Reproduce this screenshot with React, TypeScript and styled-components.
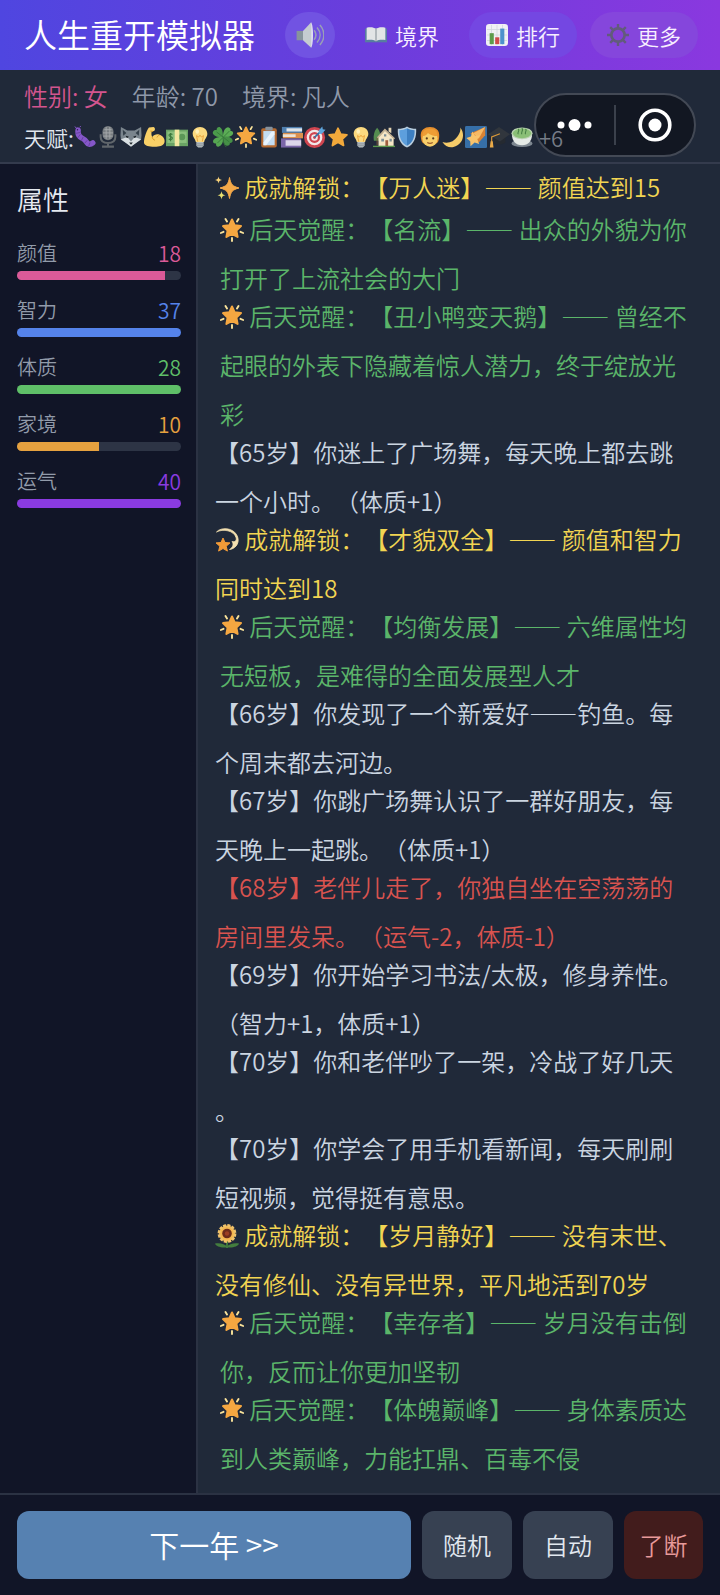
import { ReactNode } from "react";
import styled, { createGlobalStyle } from "styled-components";

type IconName =
  | "worm" | "mic" | "wolf" | "muscle" | "cash" | "bulb" | "clover" | "glow"
  | "clipboard" | "books" | "target" | "star" | "house" | "shield" | "person"
  | "moon" | "comet" | "cap" | "tea" | "sound" | "book" | "chart" | "gear"
  | "sparkles" | "dizzy" | "sunflower";

const STAR = "M12 2.5l2.9 6.3 6.8.8-5 4.7 1.3 6.9-6-3.4-6 3.4 1.3-6.9-5-4.7 6.8-.8z";

const ICONS: Record<IconName, ReactNode> = {
  worm: (
    <>
      <path d="M4.500 4.500c-.5 4 .5 7 4 8.500 3 1.300 4 2.500 5.500 5 1.500 2.500 4 2.500 6.500.5" fill="none" stroke="#8557c9" strokeWidth="6" strokeLinecap="round" />
      <path d="M2 8l5-1M4 13l3-4M8 16l2-4M11.500 19l3-3.500M16 22l1.500-4" stroke="#65409f" strokeWidth="1" />
      <path d="M2.500 2.500L1 .5M6 1.500L7.500 0" stroke="#8557c9" strokeWidth="1" />
      <circle cx="3.800" cy="4" r=".8" fill="#2c1b50" />
    </>
  ),
  mic: (
    <>
      <rect x="6" y="0" width="12" height="15.500" rx="6" fill="#777c80" />
      <path d="M8 4h8M6.500 7.500h11M7 11h10M10 1v13M14 1v13" stroke="#a5a9ab" strokeWidth="1" />
      <path d="M4 9v3c0 4.500 3.500 6.500 8 6.500s8-2 8-6.500V9M12 18v4M5.500 22.500h13" fill="none" stroke="#60666b" strokeWidth="2.200" />
    </>
  ),
  wolf: (
    <>
      <path d="M1 1l7 4h8l7-4 .5 9-.5 5-5 3-6 4-6-4-5-3-.5-5z" fill="#7a858d" />
      <path d="M3 4l4 3.500-3.500 3zM21 4l-4 3.500 3.500 3z" fill="#34404a" />
      <path d="M1 14.500l7-2.500 4 5 4-5 7 2.500-5.500 4-5.500 4-5.500-4z" fill="#d8dfe2" />
      <path d="M6.500 10.500l3 1-1 1.500-2-.7zM17.500 10.500l-3 1 1 1.500 2-.7z" fill="#1d242a" />
      <path d="M10 18h4l-2 2.500z" fill="#1d242a" />
    </>
  ),
  muscle: (
    <>
      <path d="M6.500 1.500l5-.5c2 .5 2 3.500.5 4.500l-2.500.5c-.5 2-.5 4 .5 6 2-2.500 5-3.500 8-2.500 4 1.200 6 4.500 5.500 8-.5 3.500-4 5-9 5-6 0-11-.5-13-3C0 17 3 6 6.500 1.500z" fill="#f9d067" />
      <path d="M10 12c.3 1.800 1.300 3 3 3.500M8 5.500l3 .5M18 10c-1.500.5-2.500 1.500-2.800 2.500" fill="none" stroke="#cf952a" strokeWidth="1" />
    </>
  ),
  cash: (
    <>
      <rect x="0" y="4" width="24" height="18" fill="#6aa365" />
      <rect x="1.500" y="6" width="21" height="12.500" fill="#8abf7d" />
      <circle cx="17.500" cy="12" r="3.500" fill="#5b9657" />
      <path d="M7 9.200c-2-1.200-3.800-.4-3.800 1s3.800 1.400 3.800 3-2.200 2.200-4 1M5 7.500v9" fill="none" stroke="#3c783d" strokeWidth="1.200" />
      <rect x="9.500" y="4" width="5" height="18" fill="#f3e7a1" />
    </>
  ),
  bulb: (
    <>
      <path d="M12 1c4.700 0 8 3.300 8 7.500 0 3.500-2.500 5-3.500 9h-9C6.500 13.500 4 12 4 8.500 4 4.300 7.300 1 12 1z" fill="#fbd97f" />
      <path d="M9.500 17l-1.300-6.500 2.300 1.500L12 10l1.500 2 2.300-1.500-1.300 6.500" fill="none" stroke="#e9a13a" strokeWidth="1" />
      <ellipse cx="9" cy="6" rx="2" ry="2.500" fill="#fff0b8" />
      <path d="M8 17.500h8v4L14 23.500h-4L8 21.500z" fill="#b4bcc0" />
      <path d="M8 19.500h8M8.500 21.500h7" stroke="#7f898e" strokeWidth=".8" />
    </>
  ),
  clover: (
    <>
      <path d="M12 12C4 13 0 9 1 6.500 2 4 4.500 4.500 5 4.500 5 2 7 .5 9 1.500c2.500 1.500 3 6 3 10.500z" fill="#4b9a4b" />
      <path d="M12 12C12 5 15 1 18 1.500c2.500.5 2.500 3 2 4 2-.5 3.500 1 3 3-1 3-6 4-11 3.500z" fill="#5bad55" />
      <path d="M12 12c6-1.500 10 1 10.500 3.500.3 2-1.500 3.300-3 3 .3 2-1.500 3.500-3.500 3C13 20.500 12 16 12 12z" fill="#458f46" />
      <path d="M12 12c1 6-2 10-5 10.500-2 .2-3-1.500-2.500-3.500C2 19.500.8 18 1.200 16 2 13 7 11.500 12 12z" fill="#56a652" />
      <path d="M5 6.500L19 17.500M19 5.500L6 18.500M12 13c0 4 1.500 8 3.500 10" fill="none" stroke="#347539" strokeWidth=".9" />
    </>
  ),
  glow: (
    <>
      <path d="M12 1.500l2.700 5.800 6.300.8-4.600 4.500 1.200 6.400-5.600-3.200L6.400 19l1.200-6.400L3 8.100l6.300-.8z" fill="#f5a741" stroke="#f5a741" strokeWidth="2" strokeLinejoin="round" />
      <path d="M5.500 1l1.500 2.500M18.500 1L17 3.500M.8 15l2.700-1.200M23.200 15l-2.700-1.200M12 20v3" stroke="#fbe49b" strokeWidth="1.900" strokeLinecap="round" />
    </>
  ),
  clipboard: (
    <>
      <rect x="3.500" y="2.500" width="17" height="21" rx="2" fill="#b4692f" />
      <rect x="5.800" y="5.500" width="12.400" height="15.500" fill="#c3ddf2" />
      <path d="M6 18l9-12h3v3L9 21H6z" fill="#e8f3fc" />
      <rect x="8" y=".8" width="8" height="4" rx="1" fill="#87919a" />
    </>
  ),
  books: (
    <>
      <path d="M1 1h22v6.500H1z" fill="#4f7faf" />
      <path d="M6 2.500h17v3.500H6z" fill="#dfe5ea" />
      <path d="M2 7.500h22v6H2z" fill="#db904d" />
      <path d="M2 9h14v3H2z" fill="#eee3d4" />
      <path d="M0 13.500h22v10H0z" fill="#7a66a8" />
      <path d="M5 15.500h17v6H5z" fill="#dcd6ea" />
    </>
  ),
  target: (
    <>
      <circle cx="11.500" cy="12.500" r="11.500" fill="#cf4550" />
      <circle cx="11.500" cy="12.500" r="8.500" fill="#f1e7e8" />
      <circle cx="11.500" cy="12.500" r="6" fill="#cf4550" />
      <circle cx="11.500" cy="12.500" r="3.600" fill="#f1e7e8" />
      <circle cx="11.500" cy="12.500" r="1.600" fill="#cf4550" />
      <path d="M11.500 12.500L19 5" stroke="#3574a8" strokeWidth="1.800" />
      <path d="M16 5l4-4.500.5 3 3 .5-4 4.500-3 .2z" fill="#5ea5dc" />
    </>
  ),
  star: <path d={STAR} fill="#f2a93b" stroke="#f2a93b" strokeWidth="2" strokeLinejoin="round" />,
  house: (
    <>
      <path d="M4.500 2C1.500 5 0 11 1 16h7c1-5-.5-11-3.500-14z" fill="#548d50" />
      <path d="M4 12h1v9H4z" fill="#80583b" />
      <path d="M6 12l7-7 9.500 8v9H6z" fill="#f5e6c6" />
      <path d="M5 13l8-9 10.500 10" fill="none" stroke="#c3b192" strokeWidth="1.800" />
      <path d="M17 2h3v6l-3-2z" fill="#e4d3b0" />
      <path d="M9 14h3v3H9zM12 9h2.500v2.500H12zM18 14h2.500v3H18z" fill="#7c8f96" />
      <path d="M13.500 15.500h3V22h-3z" fill="#a05d3f" />
      <path d="M0 21.500h24V23H0z" fill="#5b984e" />
    </>
  ),
  shield: (
    <>
      <path d="M12 .5c3 2 6 2.500 10 2.500.5 9-2 17-10 20.500C4 20 1.500 12 2 3c4 0 7-.5 10-2.500z" fill="#b9cedf" />
      <path d="M12 2.500c2.500 1.500 5 2 8.300 2.200.2 7.300-1.800 13.500-8.300 16.800z" fill="#3d7fc1" />
      <path d="M12 2.500C9.500 4 7 4.500 3.700 4.700c-.2 7.300 1.800 13.500 8.300 16.800z" fill="#5d9fdd" />
    </>
  ),
  person: (
    <>
      <path d="M2 12C1 4.500 6 1 12 1s11 3.500 10 11c-.5 4-1 6-3 7H5c-2-1-2.500-3-3-7z" fill="#e58e2d" />
      <ellipse cx="12" cy="13.500" rx="8.300" ry="9" fill="#f8cf6b" />
      <path d="M3.700 11c2.300 0 5-1.500 6-3.500 2 2 6.500 3.500 10.600 3.500C20 5 17 3 12 3S4 5 3.700 11z" fill="#ee9d35" />
      <circle cx="8.500" cy="13.500" r="1.200" fill="#54371f" />
      <circle cx="15.500" cy="13.500" r="1.200" fill="#54371f" />
      <path d="M9 18c2 1.300 4 1.300 6 0" fill="none" stroke="#9b5a2b" strokeWidth="1.300" />
    </>
  ),
  moon: <path d="M20 1.500c6 8 2.500 19-7.500 21.500C8 24 3 22 .5 17.500c6.500 2 12.500-.5 16-5.500C19 8.500 20.500 5.500 20 1.500z" fill="#f5cb69" />,
  comet: (
    <>
      <rect width="24" height="24" rx="1.500" fill="#366fa8" />
      <path d="M6 8L22 1v9l-7 8z" fill="#d98335" />
      <path d="M9 8L22 1l-7 13z" fill="#f6b965" />
      <path d="M8 6l3 4.500 5.500-.5-3 4.500 2 5-5-1.500L6 22l-.3-5.500L1.500 13l5-1.500z" fill="#f8c36c" />
    </>
  ),
  cap: (
    <>
      <path d="M5 11v7c4 3 10 3 14 0v-7z" fill="#252a31" />
      <path d="M0 9L12 1l12 8-11 8z" fill="#31363d" />
      <path d="M13 8.500L4 12v6" fill="none" stroke="#d99839" strokeWidth="1.300" />
      <path d="M2.800 16.500h2.400l.8 7H2z" fill="#e9aa48" />
    </>
  ),
  tea: (
    <>
      <ellipse cx="12" cy="19" rx="11.500" ry="4" fill="#7d8790" />
      <path d="M1 9h22c0 7-4 12-11 12S1 16 1 9z" fill="#e5eae6" />
      <ellipse cx="12" cy="8" rx="11.500" ry="6.500" fill="#bcd3b3" />
      <ellipse cx="12" cy="8" rx="10" ry="5.300" fill="#8abf76" />
      <path d="M8 9c-2-2 2-3 0-6M12 9c-2-2 2-3 0-7M16 9c-2-2 2-3 0-6" fill="none" stroke="#447c43" strokeWidth="1.100" />
    </>
  ),
  sound: (
    <>
      <path d="M.5 8.500H6v8H.5z" fill="#87949c" />
      <path d="M6 8.500L13 1v22l-7-6.500z" fill="#c5ccd0" />
      <path d="M13 1c2 3 2 19 0 22z" fill="#eef1f2" />
      <path d="M15.500 8c2 2.500 2 5.500 0 8M18 5.500c3.500 4 3.500 9 0 13M20.500 3.500c4.500 5 4.500 12 0 17" fill="none" stroke="#9aa0b5" strokeWidth="1.300" />
    </>
  ),
  book: (
    <>
      <path d="M0 5h24v15H0z" fill="#587da0" />
      <path d="M1.800 4c4-1 7.700-.6 10.200 1.200C14.500 3.400 18.200 3 22.200 4v13.500c-4-.6-7.700-.3-10.200 1.200-2.500-1.500-6.200-1.800-10.200-1.200z" fill="#e2e5e6" />
      <path d="M12 5.200v13.500" stroke="#9ba4aa" strokeWidth="1.500" />
    </>
  ),
  chart: (
    <>
      <rect width="24" height="24" rx="3.500" fill="#f0f1f4" />
      <path d="M1 6h22M1 12h22M1 18h22M6 1v22M12 1v22M18 1v22" stroke="#cfd6dc" strokeWidth=".8" />
      <path d="M4 10h4.500v12H4z" fill="#5d9b4c" />
      <path d="M10 14.500h4.500V22H10z" fill="#cf4b4b" />
      <path d="M15.500 5H20v17h-4.500z" fill="#4d91cc" />
    </>
  ),
  gear: (
    <>
      <path d="M12 0v24M0 12h24M3.500 3.500l17 17M20.500 3.500l-17 17" stroke="#625b7b" strokeWidth="2.600" />
      <circle cx="12" cy="12" r="8.700" fill="#625b7b" />
      <circle cx="12" cy="12" r="5.800" fill="#8541d6" />
    </>
  ),
  sparkles: (
    <>
      <path d="M14.500 1.500c1.200 6.800 3 8.800 9.500 10.500-6.500 1.700-8.300 3.700-9.500 10.500C13.300 15.700 11.500 13.700 5 12c6.500-1.700 8.300-3.700 9.500-10.500z" fill="#f4a949" stroke="#f4a949" strokeWidth="1" />
      <path d="M3.500.5C4 3 4.500 3.500 7 4c-2.500.5-3 1-3.500 3.500C3 5 2.500 4.500 0 4c2.500-.5 3-1 3.500-3.500z" fill="#f8d27a" />
      <path d="M6.500 15c.5 3 1.200 3.700 4 4.300-2.800.6-3.500 1.300-4 4.300-.5-3-1.200-3.700-4-4.300 2.800-.6 3.500-1.300 4-4.300z" fill="#e8df70" />
    </>
  ),
  dizzy: (
    <>
      <path d="M1.500 4C6-1 17-.5 21.500 6.500c4 6.500.5 14-7 15 3.500-2 4.500-5.500 2.500-8 3 1 5-1 4-4C19 2.500 8 .5 1.500 4z" fill="#f3e0b0" stroke="#f3e0b0" strokeWidth=".8" />
      <path d="M8 10l2 4.500 5 .4-3.800 3.300 1.200 4.900-4.400-2.600-4.400 2.600 1.200-4.900L1 14.900l5-.4z" fill="#f19b38" stroke="#f19b38" strokeWidth="1" strokeLinejoin="round" />
    </>
  ),
  sunflower: (
    <>
      <path d="M11 16h2v8h-2z" fill="#3f743c" />
      <path d="M0 19.500c5-1 10 .5 12 3 2-2.500 7-4 12-3-1 3-6 4.500-12 3.800C6 24 1 22.500 0 19.500z" fill="#437d3e" />
      <circle cx="12" cy="9.500" r="8" fill="#f3b64f" stroke="#f0c26b" strokeWidth="2.800" strokeDasharray="3 1.200" />
      <circle cx="12" cy="9.500" r="4.800" fill="#6b2b1b" />
      <circle cx="12" cy="9.500" r="2.200" fill="#9b3e22" />
    </>
  ),
};

const IconSvg = styled.svg<{ $size: number }>`
  flex: none;
  width: ${({ $size }) => $size}px;
  height: ${({ $size }) => $size}px;
  vertical-align: -3px;
`;

const Icon = ({ name, size = 22 }: { name: IconName; size?: number }) => (
  <IconSvg $size={size} viewBox="0 0 24 24" aria-hidden="true">
    {ICONS[name]}
  </IconSvg>
);

interface Stat {
  label: string;
  value: number;
  color: string;
}

const MAX_STAT = 20;

const stats: Stat[] = [
  { label: "颜值", value: 18, color: "#db5a98" },
  { label: "智力", value: 37, color: "#5583ea" },
  { label: "体质", value: 28, color: "#5fbf68" },
  { label: "家境", value: 10, color: "#e6a13f" },
  { label: "运气", value: 40, color: "#8a3be0" },
];

const talents: IconName[] = [
  "worm", "mic", "wolf", "muscle", "cash", "bulb", "clover", "glow", "clipboard", "books",
  "target", "star", "bulb", "house", "shield", "person", "moon", "comet", "cap", "tea",
];

type EntryKind = "normal" | "achievement" | "awaken" | "bad";

interface LogEntry {
  kind: EntryKind;
  icon?: IconName;
  text: string;
}

const log: LogEntry[] = [
  { kind: "achievement", icon: "sparkles", text: "成就解锁：【万人迷】—— 颜值达到15" },
  { kind: "awaken", icon: "glow", text: "后天觉醒：【名流】—— 出众的外貌为你打开了上流社会的大门" },
  { kind: "awaken", icon: "glow", text: "后天觉醒：【丑小鸭变天鹅】—— 曾经不起眼的外表下隐藏着惊人潜力，终于绽放光彩" },
  { kind: "normal", text: "【65岁】你迷上了广场舞，每天晚上都去跳一个小时。（体质+1）" },
  { kind: "achievement", icon: "dizzy", text: "成就解锁：【才貌双全】—— 颜值和智力同时达到18" },
  { kind: "awaken", icon: "glow", text: "后天觉醒：【均衡发展】—— 六维属性均无短板，是难得的全面发展型人才" },
  { kind: "normal", text: "【66岁】你发现了一个新爱好——钓鱼。每个周末都去河边。" },
  { kind: "normal", text: "【67岁】你跳广场舞认识了一群好朋友，每天晚上一起跳。（体质+1）" },
  { kind: "bad", text: "【68岁】老伴儿走了，你独自坐在空荡荡的房间里发呆。（运气-2，体质-1）" },
  { kind: "normal", text: "【69岁】你开始学习书法/太极，修身养性。（智力+1，体质+1）" },
  { kind: "normal", text: "【70岁】你和老伴吵了一架，冷战了好几天。" },
  { kind: "normal", text: "【70岁】你学会了用手机看新闻，每天刷刷短视频，觉得挺有意思。" },
  { kind: "achievement", icon: "sunflower", text: "成就解锁：【岁月静好】—— 没有末世、没有修仙、没有异世界，平凡地活到70岁" },
  { kind: "awaken", icon: "glow", text: "后天觉醒：【幸存者】—— 岁月没有击倒你，反而让你更加坚韧" },
  { kind: "awaken", icon: "glow", text: "后天觉醒：【体魄巅峰】—— 身体素质达到人类巅峰，力能扛鼎、百毒不侵" },
];

const entryColors: Record<EntryKind, string> = {
  normal: "#cbd5e1",
  achievement: "#f2d552",
  awaken: "#5bb56a",
  bad: "#d9534f",
};

const GlobalStyle = createGlobalStyle`
  * {
    box-sizing: border-box;
  }
  body {
    margin: 0;
    background: #111527;
    font-family: "Noto Sans CJK SC", sans-serif;
    font-weight: 350;
    text-spacing-trim: space-all;
  }
  button {
    border: 0;
    font: inherit;
    cursor: pointer;
  }
`;

const Screen = styled.div`
  display: flex;
  flex-direction: column;
  min-height: 100vh;
`;

const Header = styled.header`
  display: flex;
  align-items: center;
  gap: 13px;
  height: 70px;
  padding: 0 22px 0 24px;
  background: linear-gradient(90deg, #4f46e0, #6a3ddc 50%, #8a38df);
`;

const Title = styled.h1`
  flex: 1;
  margin: 0;
  padding-bottom: 2px;
  color: #fff;
  font-size: 33px;
  line-height: 48px;
  font-weight: 350;
  white-space: nowrap;
`;

const HeaderButton = styled.button<{ $tint: string; $round?: boolean }>`
  display: flex;
  align-items: center;
  justify-content: center;
  gap: 8px;
  height: 46px;
  padding: 0 ${({ $round }) => ($round ? 11 : 17)}px 1px;
  border-radius: 23px;
  background: ${({ $tint }) => $tint};
  color: #f7efff;
  font-size: 22px;
  line-height: 32px;
  white-space: nowrap;
`;

const InfoPanel = styled.section`
  position: relative;
  display: flex;
  flex-direction: column;
  gap: 7px;
  padding: 9px 24px 8px;
  border-bottom: 2px solid #343b4d;
  background: #202939;
  white-space: nowrap;
`;

const InfoRow = styled.div`
  display: flex;
  gap: 24px;
  color: #8f98a9;
  font-size: 24px;
  line-height: 34px;
`;

const Gender = styled.span`
  color: #d3558f;
`;

const TalentRow = styled.div`
  display: flex;
  align-items: center;
  color: #e2e8f0;
  font-size: 22px;
  line-height: 34px;
`;

const TalentIcons = styled.span`
  display: flex;
  gap: 1px;
`;

const MoreTalents = styled.span`
  position: relative;
  z-index: 1;
  padding-left: 6px;
  color: #767c87;
`;

const Capsule = styled.div`
  position: absolute;
  top: 23px;
  right: 24px;
  display: flex;
  align-items: center;
  width: 162px;
  height: 64px;
  border: 2px solid #434955;
  border-radius: 32px;
  background: #121722;
`;

const CapsuleButton = styled.button`
  display: flex;
  flex: 1;
  align-items: center;
  justify-content: center;
  height: 40px;
  padding: 0;
  background: transparent;

  & + & {
    border-left: 2px solid #3b414c;
  }
`;

const Body = styled.div`
  display: flex;
  flex: 1;
`;

const Sidebar = styled.aside`
  flex: none;
  width: 198px;
  padding: 17px 15px 18px 17px;
  border-right: 2px solid #2b3243;
`;

const SidebarTitle = styled.h2`
  margin: 0 0 22px;
  color: #e5e9f0;
  font-size: 26px;
  line-height: 36px;
  font-weight: 350;
`;

const StatItem = styled.div`
  margin-bottom: 16px;
`;

const StatHead = styled.div<{ $color: string }>`
  display: flex;
  justify-content: space-between;
  padding-bottom: 4px;
  color: #929baa;
  font-size: 20px;
  line-height: 28px;

  span + span {
    color: ${({ $color }) => $color};
    font-size: 21px;
  }
`;

const Track = styled.div`
  height: 9px;
  border-radius: 5px;
  background: #2d3445;
  overflow: hidden;
`;

const Fill = styled.div<{ $color: string }>`
  height: 100%;
  background: ${({ $color }) => $color};
`;

const LogPanel = styled.main`
  flex: 1;
  min-width: 0;
  padding: 0 24px 18px 17px;
  background: #202939;
`;

const Entry = styled.p<{ $kind: EntryKind }>`
  margin: 0 0 -11px;
  padding-left: ${({ $kind }) => ($kind === "awaken" ? 5 : 0)}px;
  color: ${({ $kind }) => entryColors[$kind]};
  font-size: 24px;
  line-height: 49px;
  line-break: anywhere;

  &:first-child {
    margin: -2px 0 -7px;
  }
`;

const Footer = styled.footer`
  display: flex;
  gap: 11px;
  padding: 16px 17px;
  border-top: 2px solid #2b3243;
  background: #111527;
`;

type Variant = "primary" | "plain" | "danger";

const variants: Record<Variant, string> = {
  primary: "flex: 1; background: #5681b1; color: #fff; font-size: 30px;",
  plain: "width: 90px; background: #374152; color: #e2e8f0; font-size: 24px;",
  danger: "width: 79px; background: #421c1c; color: #e89a9a; font-size: 24px;",
};

const ActionButton = styled.button<{ $variant: Variant }>`
  height: 68px;
  padding: 0 0 2px;
  border-radius: 12px;
  white-space: nowrap;
  ${({ $variant }) => variants[$variant]}
`;

const App = () => (
  <Screen lang="zh-CN">
    <GlobalStyle />
    <Header>
      <Title>人生重开模拟器</Title>
      <HeaderButton $tint="#7153e2" $round aria-label="声音">
        <Icon name="sound" size={28} />
      </HeaderButton>
      <HeaderButton $tint="transparent"><Icon name="book" />境界</HeaderButton>
      <HeaderButton $tint="#7447e2"><Icon name="chart" />排行</HeaderButton>
      <HeaderButton $tint="#8546dc"><Icon name="gear" />更多</HeaderButton>
    </Header>
    <InfoPanel>
      <InfoRow>
        <Gender>性别: 女</Gender>
        <span>年龄: 70</span>
        <span>境界: 凡人</span>
      </InfoRow>
      <TalentRow>
        <span>天赋:</span>
        <TalentIcons>
          {talents.map((name, i) => (
            <Icon key={i} name={name} />
          ))}
        </TalentIcons>
        <MoreTalents>+6</MoreTalents>
      </TalentRow>
      <Capsule>
        <CapsuleButton aria-label="菜单">
          <svg width="36" height="14" viewBox="0 0 36 14" fill="#fff">
            <circle cx="4" cy="7" r="3.500" />
            <circle cx="17.500" cy="7" r="6" />
            <circle cx="31" cy="7" r="3.500" />
          </svg>
        </CapsuleButton>
        <CapsuleButton aria-label="关闭">
          <svg width="34" height="34" viewBox="0 0 34 34">
            <circle cx="17" cy="17" r="14.800" fill="none" stroke="#fff" strokeWidth="3.600" />
            <circle cx="17" cy="17" r="6.500" fill="#fff" />
          </svg>
        </CapsuleButton>
      </Capsule>
    </InfoPanel>
    <Body>
      <Sidebar>
        <SidebarTitle>属性</SidebarTitle>
        {stats.map(({ label, value, color }) => (
          <StatItem key={label}>
            <StatHead $color={color}>
              <span>{label}</span>
              <span>{value}</span>
            </StatHead>
            <Track>
              <Fill $color={color} style={{ width: `${Math.min(100, (value / MAX_STAT) * 100)}%` }} />
            </Track>
          </StatItem>
        ))}
      </Sidebar>
      <LogPanel>
        {log.map(({ kind, icon, text }) => (
          <Entry key={text} $kind={kind}>
            {icon && <><Icon name={icon} size={24} /> </>}
            {text}
          </Entry>
        ))}
      </LogPanel>
    </Body>
    <Footer>
      <ActionButton $variant="primary">下一年 &gt;&gt;</ActionButton>
      <ActionButton $variant="plain">随机</ActionButton>
      <ActionButton $variant="plain">自动</ActionButton>
      <ActionButton $variant="danger">了断</ActionButton>
    </Footer>
  </Screen>
);

export default App;
